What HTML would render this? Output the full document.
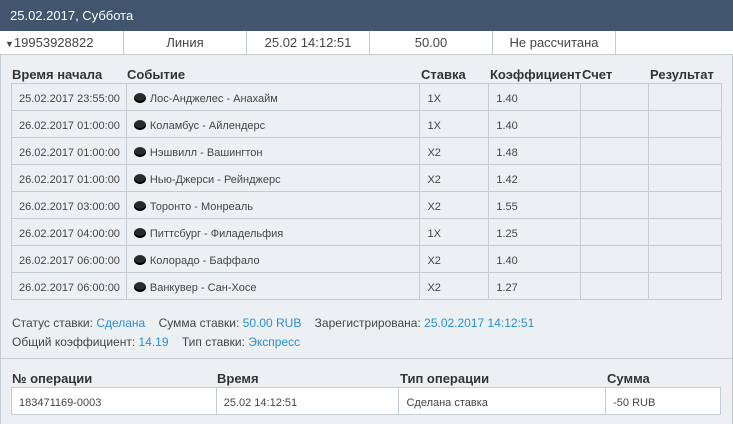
<!DOCTYPE html>
<html><head><meta charset="utf-8"><style>
*{margin:0;padding:0;box-sizing:border-box}
body{width:733px;height:424px;background:#edf0f3;font-family:"Liberation Sans",Arial,sans-serif;color:#333;position:relative;overflow:hidden}
.hd{position:absolute;left:0;top:0;width:733px;height:31px;background:#41556e;color:#fff;font-size:13px;line-height:31px;padding-left:10px}
.frame{position:absolute;left:0;top:31px;width:733px;height:393px;border-left:1px solid #c3cbd3;border-right:1px solid #c3cbd3}
.row1{position:absolute;left:0;top:31px;width:733px;height:24px;background:#fff;border-bottom:1px solid #c3cbd3;font-size:13px;color:#444}
.row1 div{position:absolute;top:0;height:23px;line-height:23px;text-align:center;border-right:1px solid #c3cbd3}
.lbl{position:absolute;font-size:13px;font-weight:bold;color:#333}
table{position:absolute;border-collapse:collapse;font-size:11px;color:#444}
td{border:1px solid #c3cbd3;padding:4px 0 0 7px;vertical-align:middle}
.puck{display:inline-block;width:12px;height:10px;background:#2a2a2a;border-radius:50%;margin-right:4px;vertical-align:-1px;box-shadow:inset 0 -2px 0 #000}
.info{position:absolute;left:12px;font-size:12px;color:#444}
.info b{font-weight:normal;color:#2a8fd6}
.sep{position:absolute;left:0;top:358px;width:733px;height:1px;background:#c3cbd3}
</style></head><body>
<div class="hd">25.02.2017, Суббота</div>
<div class="frame"></div>
<div class="row1">
<div style="left:0;width:124px;text-align:left;padding-left:5px"><span style="font-size:9px">▼</span>19953928822</div>
<div style="left:124px;width:123px">Линия</div>
<div style="left:247px;width:123px">25.02 14:12:51</div>
<div style="left:370px;width:123px">50.00</div>
<div style="left:493px;width:123px">Не рассчитана</div>
</div>
<div class="lbl" style="left:12px;top:67px">Время начала</div>
<div class="lbl" style="left:127px;top:67px">Событие</div>
<div class="lbl" style="left:421px;top:67px">Ставка</div>
<div class="lbl" style="left:490px;top:67px">Коэффициент</div>
<div class="lbl" style="left:582px;top:67px">Счет</div>
<div class="lbl" style="left:650px;top:67px">Результат</div>
<table style="left:11px;top:83px;width:711px">
<colgroup><col style="width:115px"><col style="width:294px"><col style="width:69px"><col style="width:92px"><col style="width:68px"><col style="width:73px"></colgroup>
<tr style="height:27px"><td>25.02.2017 23:55:00</td><td><span class="puck"></span>Лос-Анджелес - Анахайм</td><td>1X</td><td>1.40</td><td></td><td></td></tr>
<tr style="height:27px"><td>26.02.2017 01:00:00</td><td><span class="puck"></span>Коламбус - Айлендерс</td><td>1X</td><td>1.40</td><td></td><td></td></tr>
<tr style="height:27px"><td>26.02.2017 01:00:00</td><td><span class="puck"></span>Нэшвилл - Вашингтон</td><td>X2</td><td>1.48</td><td></td><td></td></tr>
<tr style="height:27px"><td>26.02.2017 01:00:00</td><td><span class="puck"></span>Нью-Джерси - Рейнджерс</td><td>X2</td><td>1.42</td><td></td><td></td></tr>
<tr style="height:27px"><td>26.02.2017 03:00:00</td><td><span class="puck"></span>Торонто - Монреаль</td><td>X2</td><td>1.55</td><td></td><td></td></tr>
<tr style="height:27px"><td>26.02.2017 04:00:00</td><td><span class="puck"></span>Питтсбург - Филадельфия</td><td>1X</td><td>1.25</td><td></td><td></td></tr>
<tr style="height:27px"><td>26.02.2017 06:00:00</td><td><span class="puck"></span>Колорадо - Баффало</td><td>X2</td><td>1.40</td><td></td><td></td></tr>
<tr style="height:27px"><td>26.02.2017 06:00:00</td><td><span class="puck"></span>Ванкувер - Сан-Хосе</td><td>X2</td><td>1.27</td><td></td><td></td></tr>
</table>
<div class="info" style="top:316px">Статус ставки: <b>Сделана</b> &nbsp;&nbsp; Сумма ставки: <b>50.00 RUB</b> &nbsp;&nbsp; Зарегистрирована: <b>25.02.2017 14:12:51</b></div>
<div class="info" style="top:335px">Общий коэффициент: <b>14.19</b> &nbsp;&nbsp; Тип ставки: <b>Экспресс</b></div>
<div class="sep"></div>
<div class="lbl" style="left:12px;top:371px">№ операции</div>
<div class="lbl" style="left:217px;top:371px">Время</div>
<div class="lbl" style="left:400px;top:371px">Тип операции</div>
<div class="lbl" style="left:607px;top:371px">Сумма</div>
<table style="left:11px;top:387px;width:710px;background:#fff">
<colgroup><col style="width:205px"><col style="width:183px"><col style="width:207px"><col style="width:115px"></colgroup>
<tr style="height:27px"><td>183471169-0003</td><td>25.02 14:12:51</td><td>Сделана ставка</td><td>-50 RUB</td></tr>
</table>
</body></html>
